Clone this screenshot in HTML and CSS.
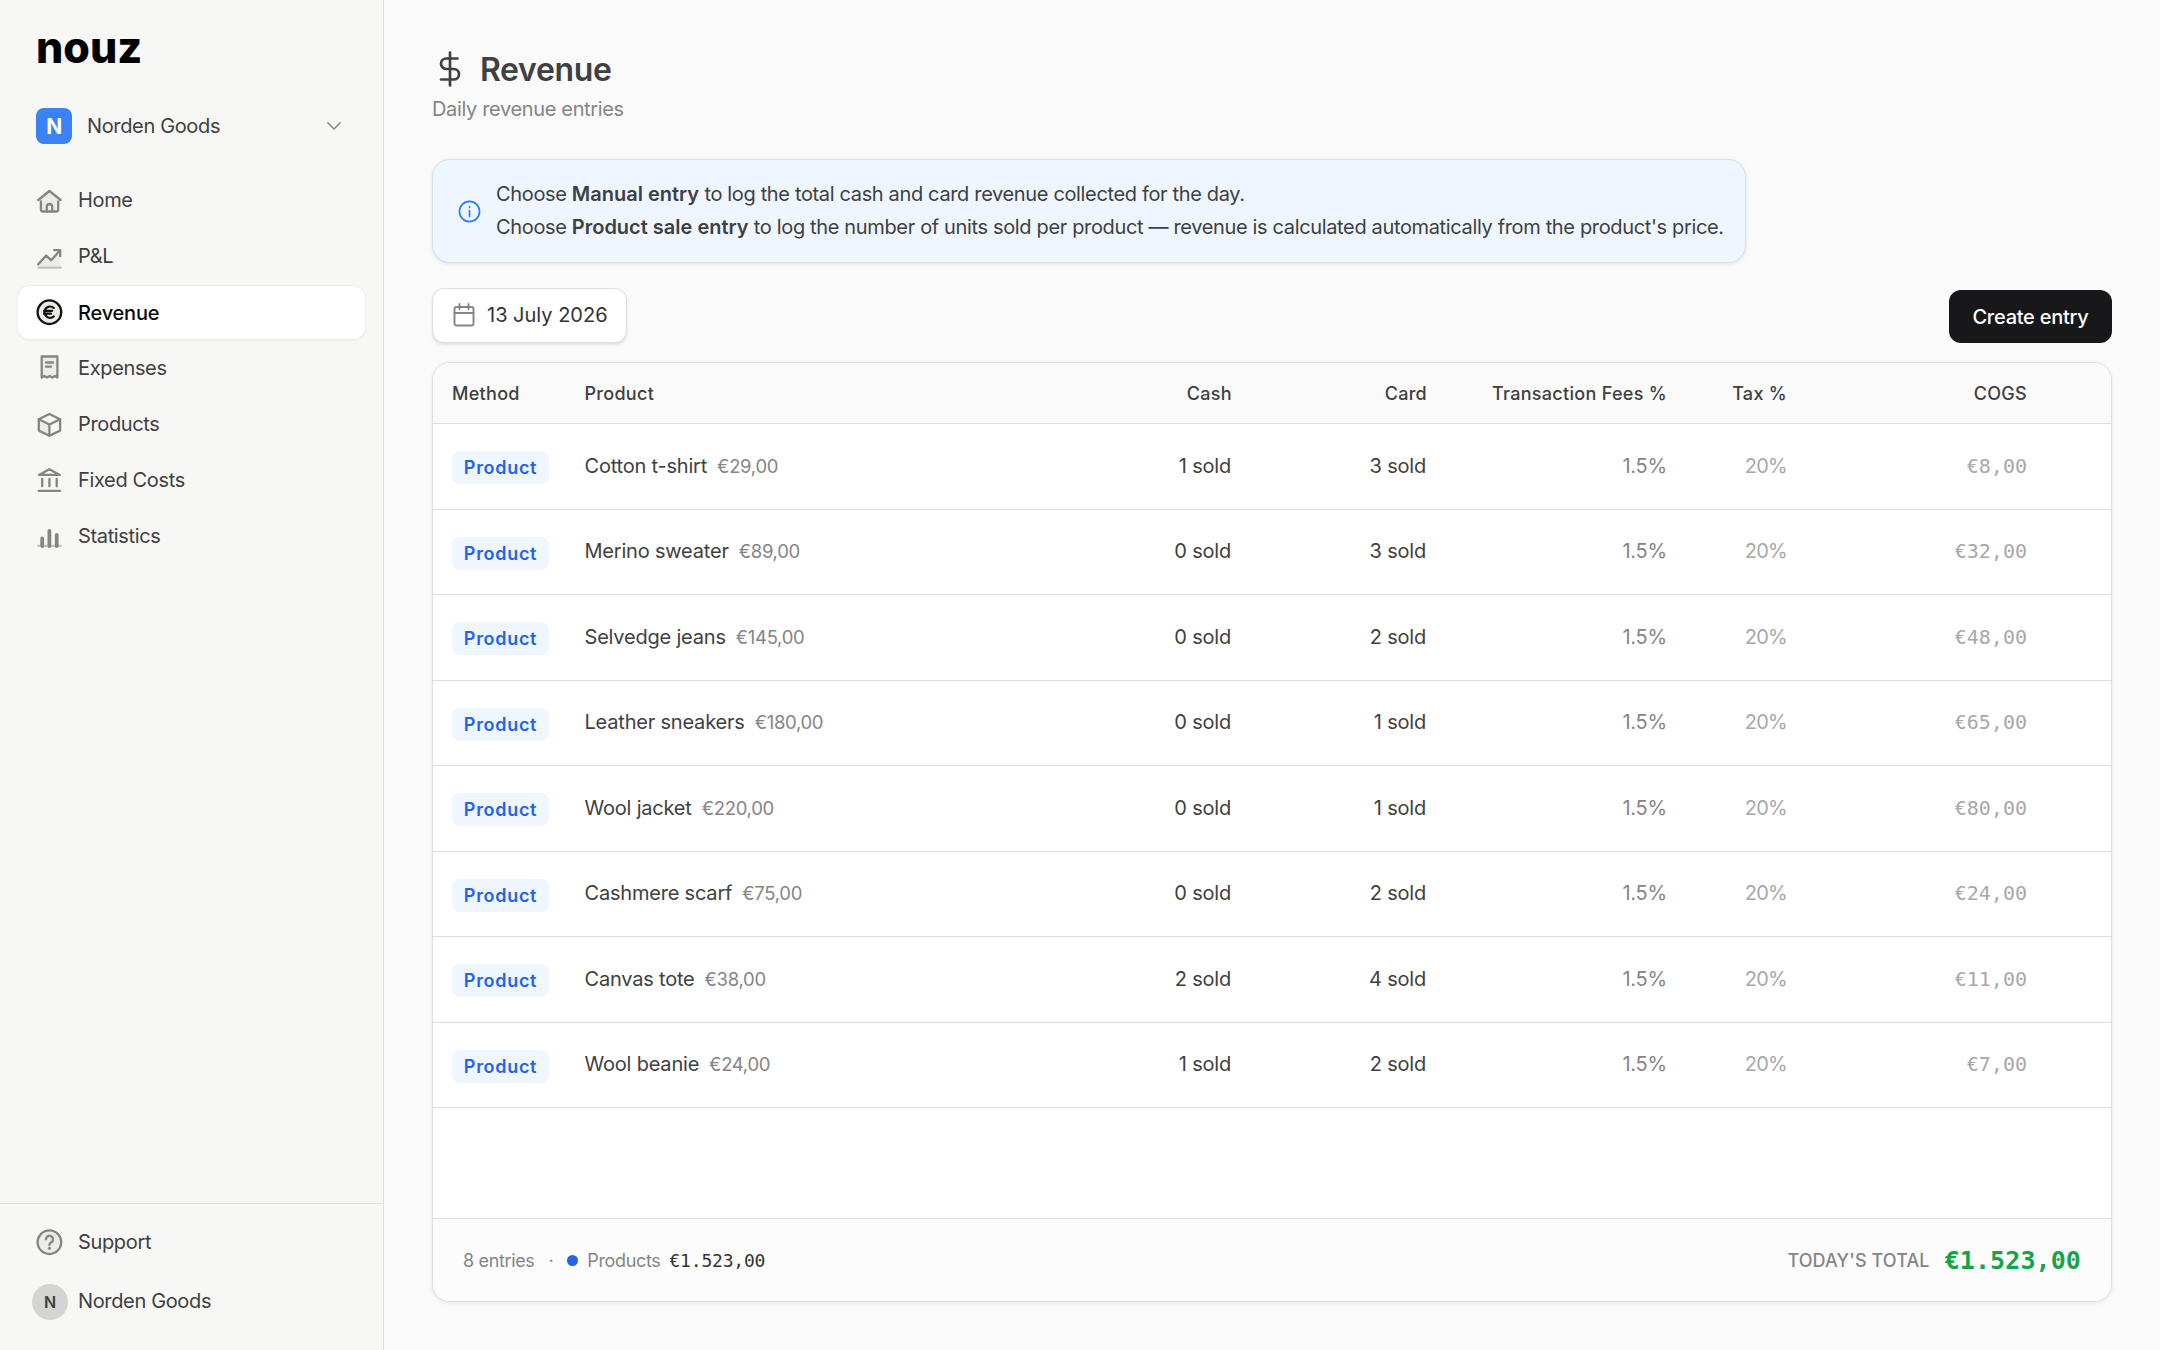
FILE: index.html
```html
<!DOCTYPE html>
<html lang="en">
<head>
    <meta charset="UTF-8">
    <meta name="viewport" content="width=device-width, initial-scale=1.0">
    <title>Revenue - nouz</title>
    <link rel="stylesheet" href="styles.css">
</head>
<body>
    <div class="app">
        <aside class="sidebar">
            <div class="logo">nouz</div>
            <div class="workspace">
                <span class="workspace-badge">N</span>
                <span class="workspace-name">Norden Goods</span>
                <svg class="chevron" viewBox="0 0 16 16"><path d="M1.8 4.8L8 11l6.2-6.2"/></svg>
            </div>

            <nav class="nav">
                <a class="nav-item">
                    <svg class="icon" viewBox="0 0 27 27">
                        <path class="tint" d="M5 12L13.4 5l9 7v12.5H5z"/>
                        <path d="M2.3 13L13.4 4l11.3 9"/>
                        <path d="M4.9 14.5v8a2 2 0 0 0 2 2h13.3a2 2 0 0 0 2-2v-8"/>
                        <path d="M10.8 24.3v-4.6a2.7 2.7 0 0 1 5.4 0v4.6"/>
                    </svg>
                    <span>Home</span>
                </a>
                <a class="nav-item">
                    <svg class="icon" viewBox="0 0 27 27">
                        <path class="tint" d="M2.3 21.5l7.9-9 5 4.800 9-10.300v17.500H2.300z"/>
                        <path d="M2.3 21.3l7.900-8.800 5 4.800 8.600-9.800"/>
                        <path d="M18.2 7.200h6v6"/>
                        <path class="soft" d="M2.300 24.600h22.500"/>
                    </svg>
                    <span>P&amp;L</span>
                </a>
                <a class="nav-item active">
                    <svg class="icon" viewBox="0 0 27 27">
                        <circle class="tint" cx="13.4" cy="13.2" r="11.8"/>
                        <circle cx="13.4" cy="13.2" r="11.8"/>
                        <path d="M17.8 9a5.600 5.600 0 1 0 0 8.400M8 11.800h8M8 14.700h7"/>
                    </svg>
                    <span>Revenue</span>
                </a>
                <a class="nav-item">
                    <svg class="icon" viewBox="0 0 27 27">
                        <path class="tint" d="M5.7 1.4h15.7v21H5.7z"/>
                        <path d="M5.700 22.600V1.500h15.700v21.100l-2.600-1.500-2.600 1.500-2.600-1.500-2.700 1.500-2.600-1.500z"/>
                        <path d="M10 7.500h7M10 11.700h5"/>
                    </svg>
                    <span>Expenses</span>
                </a>
                <a class="nav-item">
                    <svg class="icon" viewBox="0 0 27 27">
                        <path class="tint" d="M2.8 8.2L13.4 13.5v11.3L2.8 19.5z"/>
                        <path d="M13.400 3l10.700 5.200v11.400l-10.700 5.200-10.600-5.200V8.200z"/>
                        <path d="M2.800 8.200l10.600 5.300 10.700-5.300M13.400 13.500v11.300"/>
                    </svg>
                    <span>Products</span>
                </a>
                <a class="nav-item">
                    <svg class="icon" viewBox="0 0 27 27">
                        <path d="M13.4 2.2l10.400 5.700H3z"/>
                        <path d="M6.2 12v7.300M13.400 12v7.300M20.700 12v7.300M2.800 23.900h21.300"/>
                    </svg>
                    <span>Fixed Costs</span>
                </a>
                <a class="nav-item">
                    <svg class="icon" viewBox="0 0 27 27">
                        <path class="soft" d="M2.3 22.9h22.3"/>
                        <path class="bars" d="M6.200 15.500v7.500M13.400 8v15M20.700 12v11"/>
                    </svg>
                    <span>Statistics</span>
                </a>
            </nav>

            <div class="sidebar-footer">
                <a class="nav-item">
                    <svg class="icon" viewBox="0 0 27 27">
                        <circle class="tint" cx="13.4" cy="13.2" r="11.8"/>
                        <circle cx="13.4" cy="13.2" r="11.8"/>
                        <path d="M10 10.300a3.500 3.500 0 1 1 5.300 3c-1.200.8-1.900 1.300-1.900 2.700"/>
                        <circle class="dot" cx="13.4" cy="19.2" r="1.5"/>
                    </svg>
                    <span>Support</span>
                </a>
                <a class="nav-item account">
                    <span class="avatar">N</span>
                    <span>Norden Goods</span>
                </a>
            </div>
        </aside>

        <main class="main">
            <header class="page-header">
                <h1>
                    <svg class="title-icon" viewBox="0 0 24 24"><path d="M12 1v22M17 5H9.5a3.5 3.5 0 0 0 0 7h5a3.5 3.5 0 0 1 0 7H6"/></svg>
                    Revenue
                </h1>
                <p>Daily revenue entries</p>
            </header>

            <div class="info">
                <svg class="info-icon" viewBox="0 0 24 24"><circle cx="12" cy="12" r="10.5"/><path d="M12 11v6M12 7.2v.6"/></svg>
                <div>
                    <p>Choose <strong>Manual entry</strong> to log the total cash and card revenue collected for the day.</p>
                    <p>Choose <strong>Product sale entry</strong> to log the number of units sold per product — revenue is calculated automatically from the product's price.</p>
                </div>
            </div>

            <div class="toolbar">
                <button class="date-button">
                    <svg class="calendar" viewBox="0 0 22 24"><rect x="1.5" y="4" width="19" height="18.5" rx="2"/><path d="M1.5 10h19M6.500 1v5M15.500 1v5"/></svg>
                    13 July 2026
                </button>
                <button class="create-button">Create entry</button>
            </div>

            <section class="card">
                <div class="row head">
                    <div>Method</div>
                    <div>Product</div>
                    <div class="num">Cash</div>
                    <div class="num">Card</div>
                    <div class="num">Transaction Fees %</div>
                    <div class="num">Tax %</div>
                    <div class="num">COGS</div>
                </div>
                <div class="rows" id="rows"></div>
                <div class="card-footer">
                    <div class="summary">
                        <span>8 entries</span>
                        <span class="sep">·</span>
                        <span class="blue-dot"></span>
                        <span>Products</span>
                        <span class="mono">€1.523,00</span>
                    </div>
                    <div class="total">
                        <span>TODAY'S TOTAL</span>
                        <strong class="mono">€1.523,00</strong>
                    </div>
                </div>
            </section>
        </main>
    </div>
    <script src="script.js"></script>
</body>
</html>
```
FILE: styles.css
```css
* {
    box-sizing: border-box;
}

body {
    margin: 0;
    font-family: Inter, sans-serif;
    font-size: 20px;
    letter-spacing: -0.35px;
    color: #404040;
    background: #fafafa;
}

h1, p {
    margin: 0;
}

button {
    font: inherit;
}

svg {
    fill: none;
    stroke: currentColor;
    stroke-linecap: round;
    stroke-linejoin: round;
    flex-shrink: 0;
}

.app {
    display: flex;
    height: 100vh;
}

/* Sidebar */
.sidebar {
    width: 384px;
    flex-shrink: 0;
    display: flex;
    flex-direction: column;
    background: #f7f7f5;
    border-right: 1px solid #dedede;
}

.logo {
    height: 60px;
    margin: 17px 0 1px 36px;
    font-size: 43px;
    font-weight: 800;
    line-height: 60px;
    letter-spacing: 0;
    color: #000;
}

.workspace {
    display: flex;
    align-items: center;
    height: 36px;
    margin: 30px 41px 30px 36px;
}

.workspace-badge {
    display: flex;
    align-items: center;
    justify-content: center;
    width: 36px;
    height: 36px;
    border-radius: 8px;
    background: #3b82f6;
    color: #fff;
    font-weight: 700;
    font-size: 21px;
}

.workspace-name {
    flex: 1;
    margin-left: 15px;
    padding-bottom: 1px;
}

.chevron {
    width: 16px;
    height: 16px;
    color: #8c8c8c;
    stroke-width: 1.6;
}

.nav {
    display: flex;
    flex-direction: column;
    gap: 3px;
    padding: 0 18px;
}

.nav-item {
    display: flex;
    align-items: center;
    gap: 15px;
    height: 53px;
    padding-left: 18px;
    border-radius: 12px;
}

.nav-item span:last-child {
    padding-bottom: 2px;
}

.nav-item.active {
    background: #fff;
    color: #0a0a0a;
    font-weight: 500;
    letter-spacing: -0.2px;
    box-shadow: 0 0 0 1px #ededeb, 0 1px 3px rgba(0, 0, 0, 0.08);
}

.nav-item.active span:last-child {
    padding-bottom: 0;
}

.icon {
    width: 27px;
    height: 27px;
    color: #858583;
    stroke-width: 2.3;
}

.active .icon {
    color: #111;
}

.icon .tint {
    fill: #ebebe9;
    stroke: none;
}

.icon .soft {
    stroke: #c2c2c0;
}

.icon .bars {
    stroke-width: 3.8;
}

.icon .dot {
    fill: currentColor;
    stroke: none;
}

.sidebar-footer {
    margin-top: auto;
    height: 147px;
    padding: 12px 18px 0;
    border-top: 1px solid #dfdfdd;
}

.account {
    gap: 10px;
    margin-top: 6px;
    padding-left: 14px;
}

.avatar {
    display: flex;
    align-items: center;
    justify-content: center;
    width: 36px;
    height: 36px;
    border-radius: 50%;
    background: #d4d4d2;
    font-size: 16px;
    font-weight: 600;
}

/* Main column */
.main {
    flex: 1;
    display: flex;
    flex-direction: column;
    padding: 48px;
}

.page-header h1 {
    display: flex;
    align-items: center;
    gap: 12px;
    height: 42px;
    font-size: 32px;
    font-weight: 600;
}

.title-icon {
    width: 36px;
    height: 36px;
    stroke-width: 1.8;
}

.page-header p {
    margin-top: 6px;
    line-height: 26px;
    color: #858585;
}

.info {
    display: flex;
    align-items: center;
    align-self: flex-start;
    gap: 15px;
    width: 1314px;
    height: 104px;
    margin-top: 37px;
    padding-left: 25px;
    border: 1px solid #dbe0e6;
    border-radius: 18px;
    background: #eff6ff;
    box-shadow: 0 1px 4px rgba(0, 0, 0, 0.1);
    line-height: 33px;
    white-space: nowrap;
}

.info strong {
    font-weight: 600;
    letter-spacing: 0;
}

.info-icon {
    width: 23px;
    height: 23px;
    color: #2b7fff;
    stroke-width: 1.8;
}

.toolbar {
    display: flex;
    align-items: flex-end;
    justify-content: space-between;
    margin: 25px 0 19px;
}

.date-button {
    display: flex;
    align-items: center;
    gap: 12px;
    width: 195px;
    height: 55px;
    padding: 0 0 1px 20px;
    border: 1px solid #dedede;
    border-radius: 12px;
    background: #fff;
    box-shadow: 0 2px 3px rgba(0, 0, 0, 0.1);
    color: #333;
    letter-spacing: 0;
}

.calendar {
    width: 22px;
    height: 24px;
    color: #858585;
    stroke-width: 1.9;
}

.create-button {
    width: 163px;
    height: 53px;
    padding: 0;
    border: none;
    border-radius: 12px;
    background: #18181b;
    color: #fff;
    font-weight: 500;
    letter-spacing: -0.25px;
}

/* Entries table */
.card {
    flex: 1;
    display: flex;
    flex-direction: column;
    border: 1px solid #dedede;
    border-radius: 18px;
    background: #fff;
    box-shadow: 0 1px 4px rgba(0, 0, 0, 0.08);
    overflow: hidden;
}

.row {
    display: grid;
    grid-template-columns: 133.5px 488.5px 195px 195px 240px 120px 240px 1fr;
    align-items: center;
    height: 85.5px;
    padding-bottom: 1px;
    border-bottom: 1px solid #dedede;
    letter-spacing: -0.2px;
}

.row > div {
    padding: 0 18px 0 19px;
    white-space: nowrap;
}

.row > div:nth-child(2) {
    padding-left: 18px;
}

.row.head {
    height: 61px;
    padding-bottom: 0;
    background: #fafafa;
    font-size: 18px;
    font-weight: 500;
    letter-spacing: 0.3px;
}

.row .num {
    text-align: right;
}

.rows {
    flex: 1;
}

.badge {
    display: inline-block;
    width: 97px;
    height: 33px;
    margin-top: 4px;
    border-radius: 8px;
    background: #eff6ff;
    color: #2563eb;
    font-size: 18px;
    font-weight: 600;
    line-height: 33px;
    letter-spacing: 0.7px;
    text-align: center;
}

.price {
    margin-left: 10px;
    font-size: 18.5px;
    letter-spacing: -0.3px;
    color: #858585;
}

.row .sold {
    padding-right: 19px;
}

.fee {
    color: #858585;
}

.tax, .cogs {
    color: #a8a8a8;
}

.tax {
    letter-spacing: -0.7px;
}

.mono, .cogs {
    font-family: "DejaVu Sans Mono", monospace;
}

.cogs {
    letter-spacing: 0;
}

.card-footer {
    display: flex;
    align-items: center;
    justify-content: space-between;
    height: 83px;
    padding: 0 30px;
    border-top: 1px solid #dedede;
    background: #fcfcfc;
    font-size: 18px;
    color: #858585;
}

.summary, .total {
    display: flex;
    align-items: center;
}

.sep {
    margin: 0 14px;
}

.blue-dot {
    width: 11px;
    height: 11px;
    margin-right: 9px;
    border-radius: 50%;
    background: #2563eb;
}

.summary .mono {
    margin-left: 9px;
    color: #333;
    letter-spacing: -0.2px;
}

.total {
    font-weight: 500;
    letter-spacing: 0.1px;
}

.total .mono {
    margin-left: 15px;
    color: #16a34a;
    font-size: 25px;
    font-weight: 700;
}
```
FILE: script.js
```
const entries = [
    ['Cotton t-shirt', '€29,00', 1, 3, '€8,00'],
    ['Merino sweater', '€89,00', 0, 3, '€32,00'],
    ['Selvedge jeans', '€145,00', 0, 2, '€48,00'],
    ['Leather sneakers', '€180,00', 0, 1, '€65,00'],
    ['Wool jacket', '€220,00', 0, 1, '€80,00'],
    ['Cashmere scarf', '€75,00', 0, 2, '€24,00'],
    ['Canvas tote', '€38,00', 2, 4, '€11,00'],
    ['Wool beanie', '€24,00', 1, 2, '€7,00']
];

document.getElementById('rows').innerHTML = entries.map(([name, price, cash, card, cogs]) => `
    <div class="row">
        <div><span class="badge">Product</span></div>
        <div>${name}<span class="price">${price}</span></div>
        <div class="num sold">${cash} sold</div>
        <div class="num sold">${card} sold</div>
        <div class="num fee">1.5%</div>
        <div class="num tax">20%</div>
        <div class="num cogs">${cogs}</div>
    </div>`).join('');
```
